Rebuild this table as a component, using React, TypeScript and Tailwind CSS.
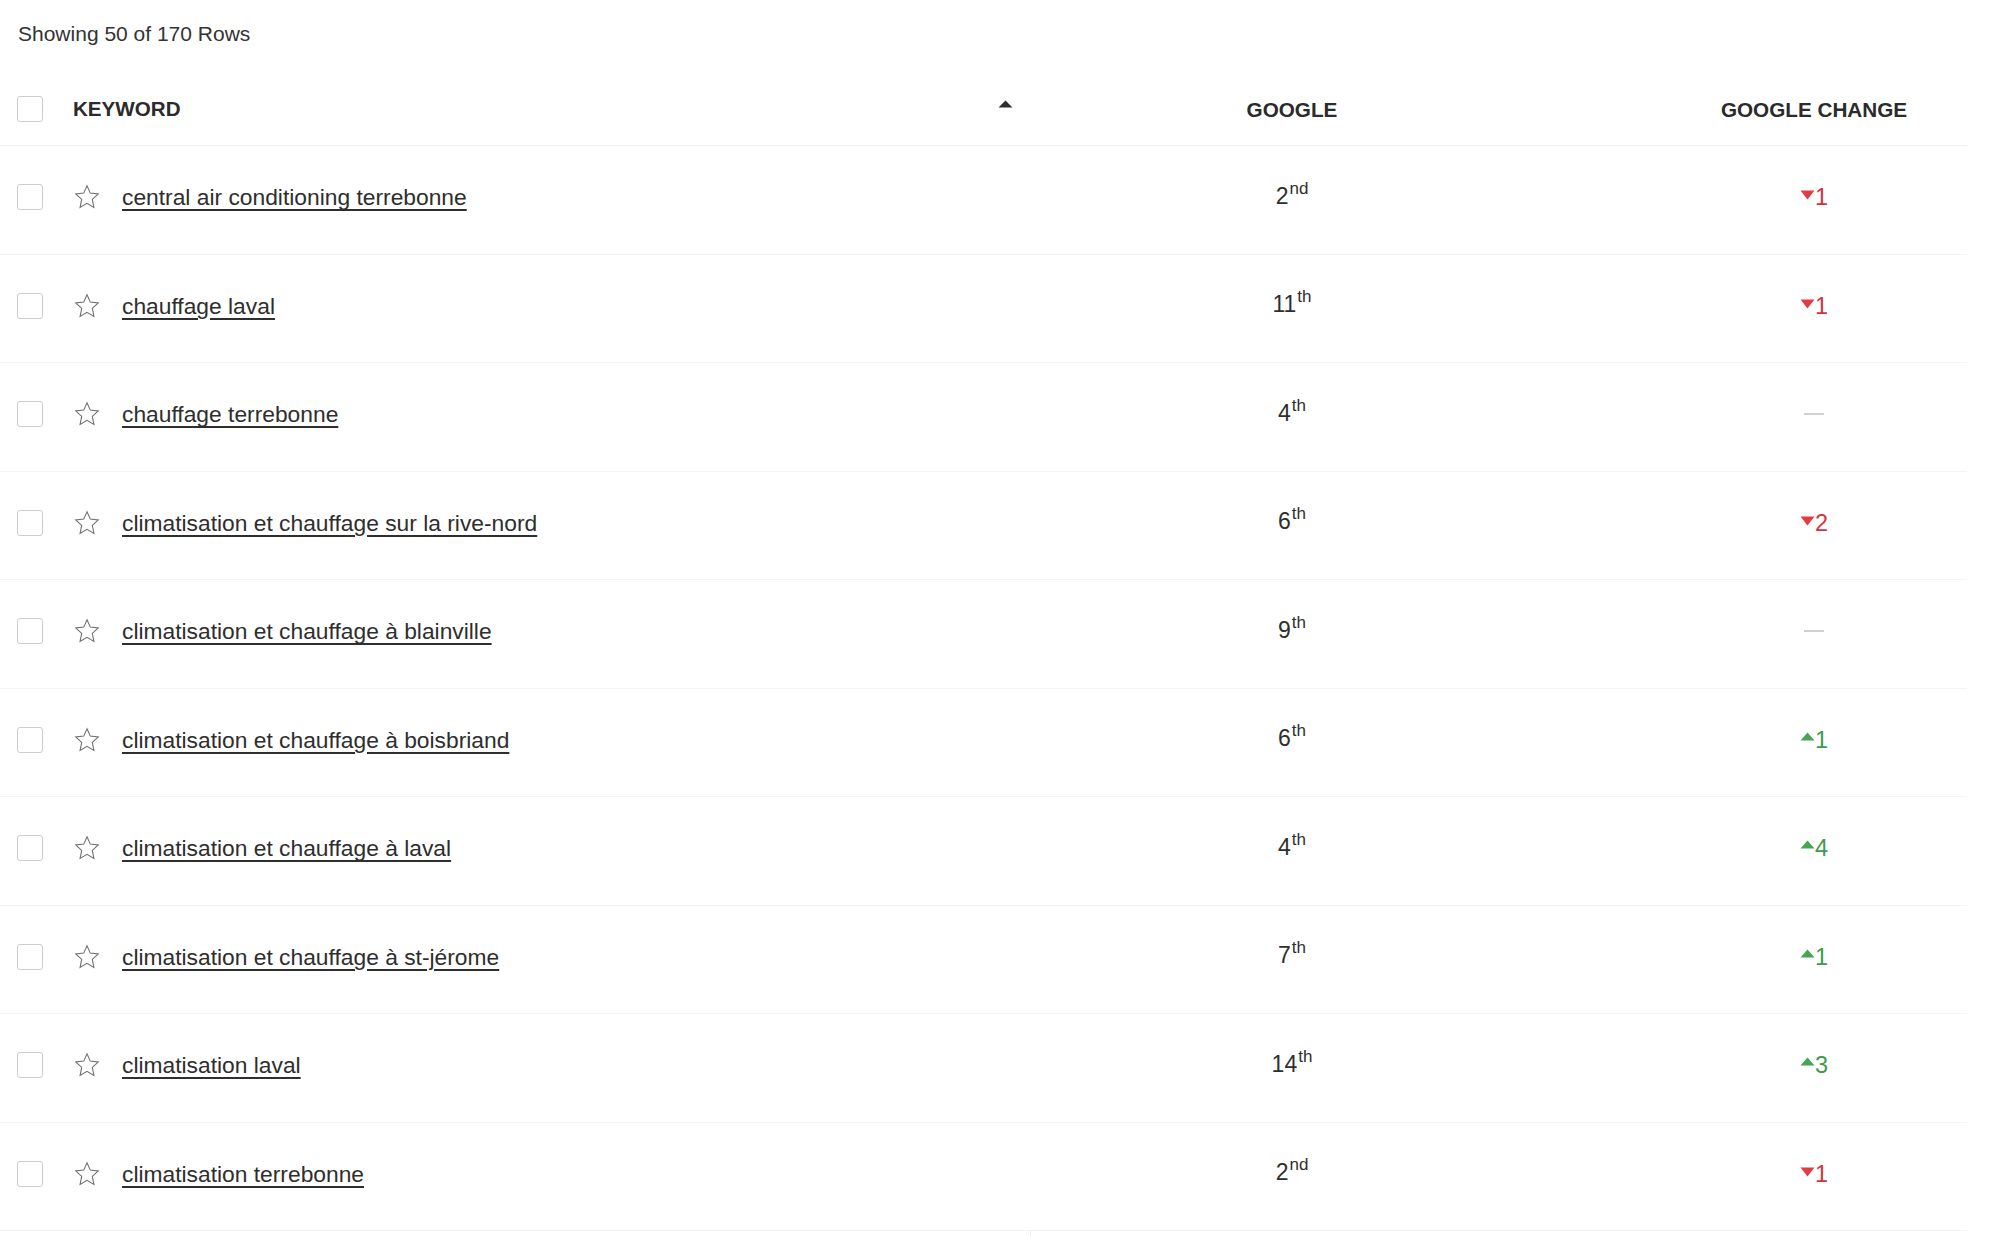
import React from 'react'

type Row = {
  keyword: string
  rank: number
  suffix: string
  change: number
}

const rows: Row[] = [
  { keyword: 'central air conditioning terrebonne', rank: 2, suffix: 'nd', change: -1 },
  { keyword: 'chauffage laval', rank: 11, suffix: 'th', change: -1 },
  { keyword: 'chauffage terrebonne', rank: 4, suffix: 'th', change: 0 },
  { keyword: 'climatisation et chauffage sur la rive-nord', rank: 6, suffix: 'th', change: -2 },
  { keyword: 'climatisation et chauffage à blainville', rank: 9, suffix: 'th', change: 0 },
  { keyword: 'climatisation et chauffage à boisbriand', rank: 6, suffix: 'th', change: 1 },
  { keyword: 'climatisation et chauffage à laval', rank: 4, suffix: 'th', change: 4 },
  { keyword: 'climatisation et chauffage à st-jérome', rank: 7, suffix: 'th', change: 1 },
  { keyword: 'climatisation laval', rank: 14, suffix: 'th', change: 3 },
  { keyword: 'climatisation terrebonne', rank: 2, suffix: 'nd', change: -1 },
]

const Checkbox = () => (
  <div className="w-[26px] h-[26px] border border-[#cccccc] rounded-[3px] bg-white shrink-0" />
)

const StarIcon = () => (
  <svg width="26" height="26" viewBox="0 0 24 24" className="shrink-0">
    <polygon
      points="12,1.6 15,8.4 22.4,9.2 16.9,14.2 18.4,21.6 12,17.9 5.6,21.6 7.1,14.2 1.6,9.2 9,8.4"
      fill="none"
      stroke="#6f6f6f"
      strokeWidth="1"
      strokeLinejoin="miter"
    />
  </svg>
)

const Change = ({ value }: { value: number }) => {
  if (value === 0) {
    return <div className="w-[20px] h-[2px] bg-[#d0d0d0]" />
  }
  const up = value > 0
  return (
    <div className={`flex items-start ${up ? 'text-[#3f9a4b]' : 'text-[#d2343c]'}`}>
      {up ? (
        <svg width="15" height="9" viewBox="0 0 15 9" className="mt-[6px]">
          <path d="M7.5 0.5 L14.5 8.5 L0.5 8.5 Z" fill="#45a550" />
        </svg>
      ) : (
        <svg width="15" height="10" viewBox="0 0 15 10" className="mt-[7px]">
          <path d="M0.5 0.5 L14.5 0.5 L7.5 9.5 Z" fill="#e23b42" />
        </svg>
      )}
      <span className="text-[23.5px] leading-[28px]">{Math.abs(value)}</span>
    </div>
  )
}

export default function App() {
  return (
    <div className="w-full h-[1236px] overflow-hidden bg-white text-[#333] font-['Liberation_Sans',Arial,Helvetica,sans-serif]">
      <div className="pt-[21px] pl-[18px] text-[21px] leading-[26px] text-[#333]">Showing 50 of 170 Rows</div>

      <div className="w-[1967px] mt-[27px]">
        {/* header */}
        <div className="flex items-center h-[72px] border-b border-[#f2f2f2]">
          <div className="w-[1030px] flex items-center pl-[17px] pr-[17px]">
            <Checkbox />
            <span className="ml-[30px] text-[20.6px] font-bold text-[#2b2b2b]">KEYWORD</span>
            <svg width="15" height="8" viewBox="0 0 15 8" className="ml-auto -mt-[10px]">
              <path d="M7.5 0.5 L14.5 7.5 L0.5 7.5 Z" fill="#2f2f2f" />
            </svg>
          </div>
          <div className="w-[524px] text-center text-[20.7px] font-bold text-[#2b2b2b]">GOOGLE</div>
          <div className="w-[114px]" />
          <div className="w-[292px] text-center text-[20.7px] font-bold text-[#2b2b2b]">GOOGLE CHANGE</div>
        </div>

        {rows.map((r) => (
          <div key={r.keyword} className="flex items-center h-[108.5px] pb-[5px] border-b border-[#f4f4f4]">
            <div className="w-[1030px] flex items-center pl-[17px]">
              <Checkbox />
              <div className="ml-[31px]">
                <StarIcon />
              </div>
              <a className="ml-[22px] text-[22.8px] leading-[28px] text-[#2e2e2e] underline underline-offset-[4px] decoration-[1.5px] cursor-pointer">
                {r.keyword}
              </a>
            </div>
            <div className="w-[524px] flex justify-center">
              <span className="text-[23px] leading-[28px] text-[#2e2e2e]">
                {r.rank}
                <span className="relative -top-[10px] text-[17px] ml-[1px]">{r.suffix}</span>
              </span>
            </div>
            <div className="w-[114px]" />
            <div className="w-[292px] flex justify-center">
              <Change value={r.change} />
            </div>
          </div>
        ))}
        <div className="ml-[1030px] w-px h-[12px] bg-[#f0f0f0]" />
      </div>
    </div>
  )
}
